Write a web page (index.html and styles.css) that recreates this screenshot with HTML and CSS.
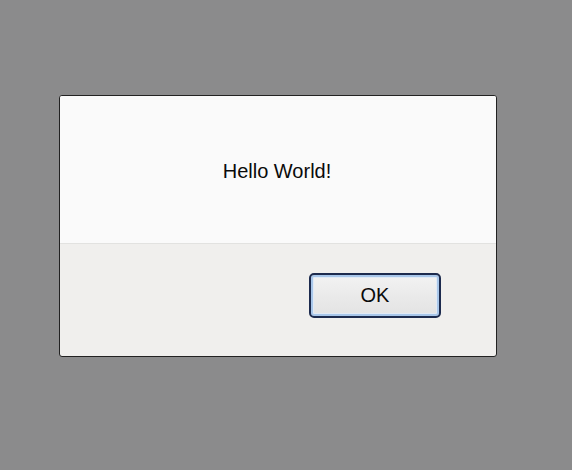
FILE: index.html
```html
<!DOCTYPE html>
<html>
<head>
<meta charset="utf-8">
<link rel="stylesheet" href="styles.css">
</head>
<body>
<div class="dialog">
  <div class="message">Hello World!</div>
  <div class="actions">
    <button class="ok">OK</button>
  </div>
</div>
</body>
</html>
```
FILE: styles.css
```css
html, body {
  margin: 0;
  height: 100%;
}
body {
  background: #8b8b8c;
  padding: 95px 0 0 59px;
  box-sizing: border-box;
  font-family: "Liberation Sans", Arial, sans-serif;
}
.dialog {
  width: 438px;
  height: 262px;
  box-sizing: border-box;
  border: 1px solid #222;
  border-radius: 3px;
  display: flex;
  flex-direction: column;
  overflow: hidden;
  background: #f0efed;
}
.message {
  height: 148px;
  background: #fafafa;
  border-bottom: 1px solid #e2e2e0;
  display: flex;
  align-items: center;
  justify-content: center;
  font-size: 20px;
  color: #0a0a0a;
  padding: 3px 2px 0 0;
  box-sizing: border-box;
}
.actions {
  flex: 1;
  display: flex;
  justify-content: flex-end;
  align-items: flex-start;
  padding: 29px 55px 0 0;
}
.ok {
  width: 132px;
  height: 45px;
  border: 2px solid #1d2b4e;
  border-radius: 5px;
  background: linear-gradient(#f3f3f3, #eaeaea 50%, #e3e3e3);
  box-shadow: inset 0 0 0 2px #a9c7ea, inset 0 0 0 3px #e1eaf5;
  font-family: "Liberation Sans", Arial, sans-serif;
  font-size: 20px;
  color: #0a0a0a;
  padding: 0;
}
```
